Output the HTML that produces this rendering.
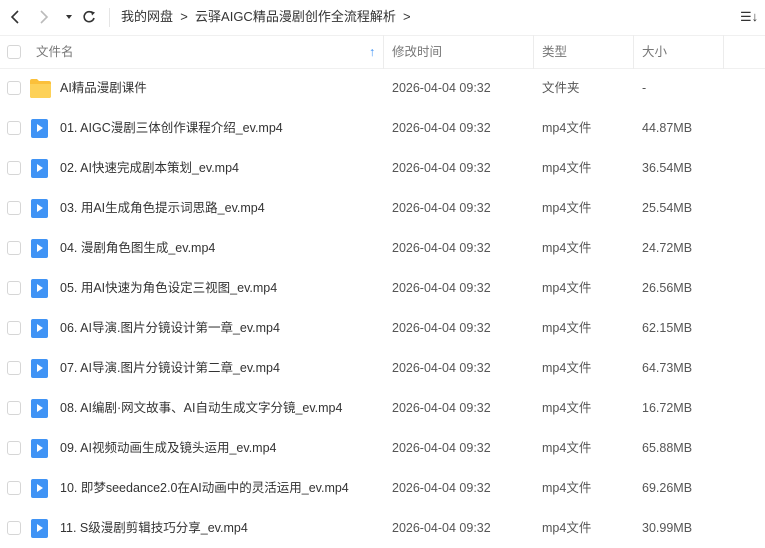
<!DOCTYPE html>
<html><head><meta charset="utf-8"><style>
*{margin:0;padding:0;box-sizing:border-box}
body{width:765px;height:548px;overflow:hidden;background:#fff;font-family:"Liberation Sans","Noto Sans CJK SC",sans-serif;font-size:12.5px;color:#333}
span,div{line-height:16px}
.abs{position:absolute}
.cb{position:absolute;left:7px;width:14px;height:14px;border:1px solid #d6d6d6;border-radius:3px;background:#fff}
.row{position:absolute;left:0;width:765px;height:40px}
.row span{position:absolute;top:12px;white-space:nowrap;height:16px;line-height:16px}
.n{left:60px;color:#333}
.t{left:392px;color:#555}
.y{left:542px;color:#555}
.s{left:642px;color:#555}
.vid{position:absolute;left:31px;top:11px;width:17px;height:19px;background:#3f93f5;border-radius:2px}
.vid:after{content:"";position:absolute;left:6px;top:5px;border-left:6px solid #fff;border-top:4.5px solid transparent;border-bottom:4.5px solid transparent}
.sep{position:absolute;top:35px;width:1px;height:34px;background:#ececec}
.h{position:absolute;top:44px;color:#777;line-height:16px}
</style></head><body>
<svg class="abs" style="left:0;top:0" width="120" height="36">
<path d="M18 11 L12 17 L18 23" stroke="#333" stroke-width="1.6" fill="none"/>
<path d="M41 11 L47 17 L41 23" stroke="#bbb" stroke-width="1.6" fill="none"/>
<path d="M66 15 L72 15 L69 19Z" fill="#333"/>
<path d="M93 13.5 A5 5 0 1 0 94 18" stroke="#333" stroke-width="1.6" fill="none"/>
<path d="M91 11 L95 12.5 L92 15.5Z" fill="#333"/>
<line x1="109.5" y1="8" x2="109.5" y2="27" stroke="#e5e5e5"/>
</svg>
<div class="abs" style="left:121px;top:9px;font-size:13px;color:#333;white-space:nowrap">我的网盘 &nbsp;&gt;&nbsp; 云驿AIGC精品漫剧创作全流程解析 &nbsp;&gt;</div>
<div class="abs" style="left:740px;top:9px;font-size:13px;color:#333">☰↓</div>
<div class="abs" style="left:0;top:35px;width:765px;height:1px;background:#f0f0f0"></div>
<div class="abs" style="left:0;top:68px;width:765px;height:1px;background:#f0f0f0"></div>
<div class="cb" style="top:45px"></div>
<span class="h" style="left:36px">文件名</span>
<span class="h" style="left:369px;color:#3f93f5;font-weight:bold">↑</span>
<div class="sep" style="left:383px"></div>
<span class="h" style="left:392px">修改时间</span>
<div class="sep" style="left:533px"></div>
<span class="h" style="left:542px">类型</span>
<div class="sep" style="left:633px"></div>
<span class="h" style="left:642px">大小</span>
<div class="sep" style="left:723px"></div>

<div class="row" style="top:68px"><div class="cb" style="top:13px"></div>
<svg class="abs" style="left:30px;top:10px" width="21" height="20"><path d="M0 3 Q0 1 2 1 L7 1 L9 3 L19 3 Q21 3 21 5 L21 18 Q21 20 19 20 L2 20 Q0 20 0 18Z" fill="#fbc03a"/><path d="M0 6 L21 6 L21 18 Q21 20 19 20 L2 20 Q0 20 0 18Z" fill="#fdd158"/></svg>
<span class="n">AI精品漫剧课件</span><span class="t">2026-04-04 09:32</span><span class="y">文件夹</span><span class="s">-</span></div>

<div class="row" style="top:108px"><div class="cb" style="top:13px"></div><div class="vid"></div><span class="n">01. AIGC漫剧三体创作课程介绍_ev.mp4</span><span class="t">2026-04-04 09:32</span><span class="y">mp4文件</span><span class="s">44.87MB</span></div>
<div class="row" style="top:148px"><div class="cb" style="top:13px"></div><div class="vid"></div><span class="n">02. AI快速完成剧本策划_ev.mp4</span><span class="t">2026-04-04 09:32</span><span class="y">mp4文件</span><span class="s">36.54MB</span></div>
<div class="row" style="top:188px"><div class="cb" style="top:13px"></div><div class="vid"></div><span class="n">03. 用AI生成角色提示词思路_ev.mp4</span><span class="t">2026-04-04 09:32</span><span class="y">mp4文件</span><span class="s">25.54MB</span></div>
<div class="row" style="top:228px"><div class="cb" style="top:13px"></div><div class="vid"></div><span class="n">04. 漫剧角色图生成_ev.mp4</span><span class="t">2026-04-04 09:32</span><span class="y">mp4文件</span><span class="s">24.72MB</span></div>
<div class="row" style="top:268px"><div class="cb" style="top:13px"></div><div class="vid"></div><span class="n">05. 用AI快速为角色设定三视图_ev.mp4</span><span class="t">2026-04-04 09:32</span><span class="y">mp4文件</span><span class="s">26.56MB</span></div>
<div class="row" style="top:308px"><div class="cb" style="top:13px"></div><div class="vid"></div><span class="n">06. AI导演.图片分镜设计第一章_ev.mp4</span><span class="t">2026-04-04 09:32</span><span class="y">mp4文件</span><span class="s">62.15MB</span></div>
<div class="row" style="top:348px"><div class="cb" style="top:13px"></div><div class="vid"></div><span class="n">07. AI导演.图片分镜设计第二章_ev.mp4</span><span class="t">2026-04-04 09:32</span><span class="y">mp4文件</span><span class="s">64.73MB</span></div>
<div class="row" style="top:388px"><div class="cb" style="top:13px"></div><div class="vid"></div><span class="n">08. AI编剧·网文故事、AI自动生成文字分镜_ev.mp4</span><span class="t">2026-04-04 09:32</span><span class="y">mp4文件</span><span class="s">16.72MB</span></div>
<div class="row" style="top:428px"><div class="cb" style="top:13px"></div><div class="vid"></div><span class="n">09. AI视频动画生成及镜头运用_ev.mp4</span><span class="t">2026-04-04 09:32</span><span class="y">mp4文件</span><span class="s">65.88MB</span></div>
<div class="row" style="top:468px"><div class="cb" style="top:13px"></div><div class="vid"></div><span class="n">10. 即梦seedance2.0在AI动画中的灵活运用_ev.mp4</span><span class="t">2026-04-04 09:32</span><span class="y">mp4文件</span><span class="s">69.26MB</span></div>
<div class="row" style="top:508px"><div class="cb" style="top:13px"></div><div class="vid"></div><span class="n">11. S级漫剧剪辑技巧分享_ev.mp4</span><span class="t">2026-04-04 09:32</span><span class="y">mp4文件</span><span class="s">30.99MB</span></div>
</body></html>
